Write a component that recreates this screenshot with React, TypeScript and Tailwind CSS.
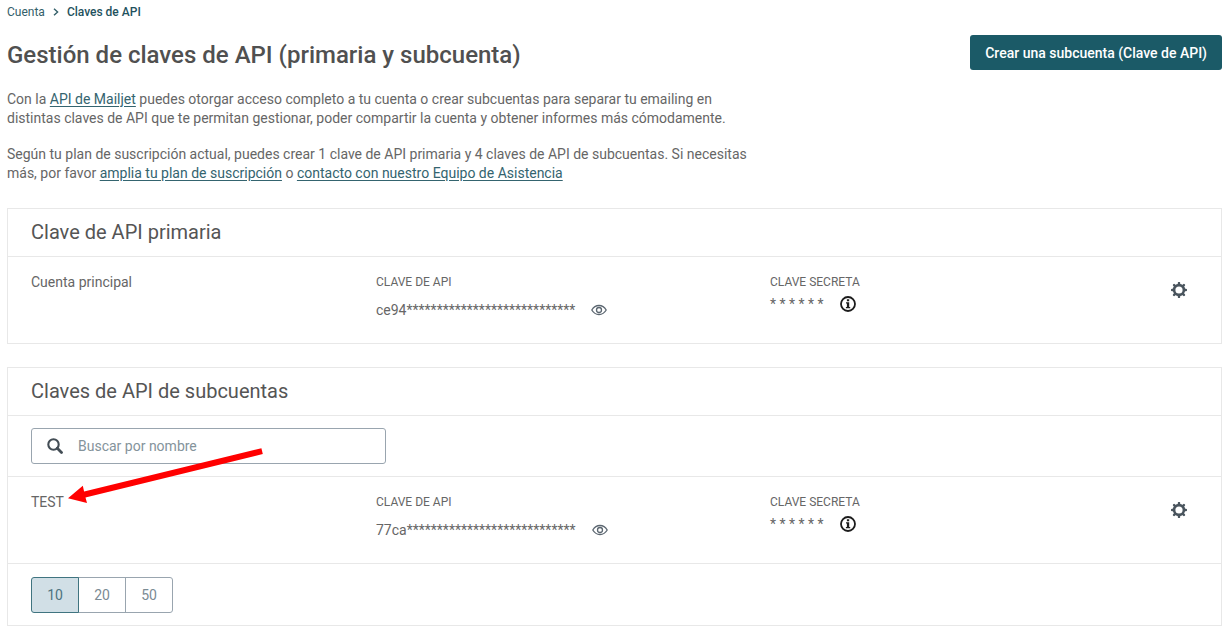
import { useState } from "react";

const mask = "*".repeat(28);

function EyeIcon() {
  return (
    <svg width="16" height="12" viewBox="0 0 16 12" fill="none" stroke="#5b6670" strokeWidth="1.3">
      <path d="M.8 6C2.6 2.9 5.1 1.5 8 1.5S13.4 2.9 15.2 6C13.4 9.1 10.9 10.5 8 10.5S2.6 9.1.8 6Z" />
      <circle cx="8" cy="6" r="2.5" />
    </svg>
  );
}

function InfoIcon() {
  return (
    <svg width="16" height="16" viewBox="0 0 16 16">
      <circle cx="8" cy="8" r="7" fill="none" stroke="#1c1c1c" strokeWidth="1.8" />
      <path d="M6.9 3.3h2.3v2H6.9zM6 6.3h3.2v4.6h1v1.3H5.9v-1.3h1V7.6H6z" fill="#1c1c1c" />
    </svg>
  );
}

function GearIcon() {
  return (
    <svg width="16" height="16" viewBox="0 0 16 16" stroke="#4a555e" fill="none">
      <circle cx="8" cy="8" r="4.9" strokeWidth="2.6" />
      <path
        d="M8 1v1.6M8 13.4v1.6M1 8h1.6M13.4 8h1.6M3.1 3.1l1 1M11.9 11.9l1 1M3.1 12.9l1-1M11.9 4.1l1-1"
        strokeWidth="2.4"
        strokeLinecap="round"
      />
    </svg>
  );
}

function SearchIcon() {
  return (
    <svg width="16" height="16" viewBox="0 0 16 16" fill="none" stroke="#434d55">
      <circle cx="6.5" cy="6.5" r="5.2" strokeWidth="2.1" />
      <path d="M10.3 10.3l4.2 4.2" strokeWidth="2.8" strokeLinecap="round" />
    </svg>
  );
}

function KeyRow({ name, prefix }: { name: string; prefix: string }) {
  return (
    <div className="grid grid-cols-[345fr_394fr_390fr_38px] px-[23px] pt-[15px] pb-[23px] text-sm leading-5">
      <div>{name}</div>
      <div>
        <div className="text-xs leading-5">CLAVE DE API</div>
        <div className="mt-2 flex items-center gap-4">
          <span>
            {prefix}
            {mask}
          </span>
          <button type="button" aria-label="Mostrar clave">
            <EyeIcon />
          </button>
        </div>
      </div>
      <div>
        <div className="text-xs leading-5">CLAVE SECRETA</div>
        <div className="mt-0.5 flex items-center gap-4">
          <span>* * * * * *</span>
          <button type="button" aria-label="Información">
            <InfoIcon />
          </button>
        </div>
      </div>
      <div className="flex justify-center pt-2.5">
        <button type="button" aria-label="Ajustes" className="h-4 w-4">
          <GearIcon />
        </button>
      </div>
    </div>
  );
}

const linkClass = "text-[#34646f] underline underline-offset-2";
const sizes = [10, 20, 50];

export default function App() {
  const [size, setSize] = useState(10);
  return (
    <main className="relative bg-white px-[7px] pt-0.5 pb-1.5 font-['Roboto',sans-serif] text-[#666666]">
      <nav aria-label="Ruta" className="flex items-center text-xs leading-5 text-[#34606a]">
        <a href="#cuenta">Cuenta</a>
        <svg width="6" height="8" viewBox="0 0 6 8" className="mx-2" fill="none" stroke="#34606a" strokeWidth="1.4">
          <path d="M1 .7L4.6 4L1 7.3" />
        </svg>
        <a href="#claves" className="font-medium text-[#1f525e]">
          Claves de API
        </a>
      </nav>

      <header className="mt-3 flex items-start justify-between">
        <h1 className="pt-[5px] text-2xl leading-8 font-medium text-[#505050]">
          Gestión de claves de API (primaria y subcuenta)
        </h1>
        <button
          type="button"
          className="mt-px h-[35px] rounded-[3px] bg-[#1b5a67] px-[15px] text-sm font-medium text-white"
        >
          Crear una subcuenta (Clave de API)
        </button>
      </header>

      <div className="mt-[19px] flex max-w-[740px] flex-col gap-[17px] text-sm leading-[19px]">
        <p>
          Con la{" "}
          <a href="#api" className={linkClass}>
            API de Mailjet
          </a>{" "}
          puedes otorgar acceso completo a tu cuenta o crear subcuentas para separar tu emailing en distintas claves de
          API que te permitan gestionar, poder compartir la cuenta y obtener informes más cómodamente.
        </p>
        <p>
          Según tu plan de suscripción actual, puedes crear 1 clave de API primaria y 4 claves de API de subcuentas. Si
          necesitas más, por favor{" "}
          <a href="#plan" className={linkClass}>
            amplia tu plan de suscripción
          </a>{" "}
          o{" "}
          <a href="#contacto" className={linkClass}>
            contacto con nuestro Equipo de Asistencia
          </a>
        </p>
      </div>

      <section className="mt-[25px] divide-y divide-[#e8e8e8] border border-[#e8e8e8]">
        <h2 className="px-[23px] py-2.5 text-xl leading-[27px] text-[#555555]">Clave de API primaria</h2>
        <KeyRow name="Cuenta principal" prefix="ce94" />
      </section>

      <section className="mt-[23px] divide-y divide-[#e8e8e8] border border-[#e8e8e8]">
        <h2 className="px-[23px] py-2.5 text-xl leading-[27px] text-[#555555]">Claves de API de subcuentas</h2>
        <div className="px-[23px] py-3">
          <label className="flex h-9 w-[355px] items-center gap-[15px] rounded-[3px] border border-[#99a5af] px-[15px]">
            <SearchIcon />
            <input
              type="text"
              aria-label="Buscar por nombre"
              placeholder="Buscar por nombre"
              className="min-w-0 flex-1 text-sm outline-none placeholder:text-[#84939b]"
            />
          </label>
        </div>
        <KeyRow name="TEST" prefix="77ca" />
        <div className="flex px-[23px] pt-[13px] pb-3">
          {sizes.map((n) => (
            <button
              key={n}
              type="button"
              aria-pressed={n === size}
              onClick={() => setSize(n)}
              className={
                n === size
                  ? "relative -mr-px h-9 w-12 border border-[#3f7480] bg-[#d1dfe6] text-sm text-[#4d747f] first:rounded-l-[3px] last:rounded-r-[3px]"
                  : "-mr-px h-9 w-12 border border-[#99a5af] text-sm text-[#7b8b94] first:rounded-l-[3px] last:rounded-r-[3px]"
              }
            >
              {n}
            </button>
          ))}
        </div>
      </section>

      <svg
        className="pointer-events-none absolute top-[440px] left-[60px]"
        width="210"
        height="70"
        viewBox="60 440 210 70"
        aria-hidden="true"
      >
        <path d="M261.4 448.3L262.8 454L85.5 497.5L87 503L68 498.3L82.8 485.8L84.1 491.6Z" fill="#ff0000" />
      </svg>
    </main>
  );
}
